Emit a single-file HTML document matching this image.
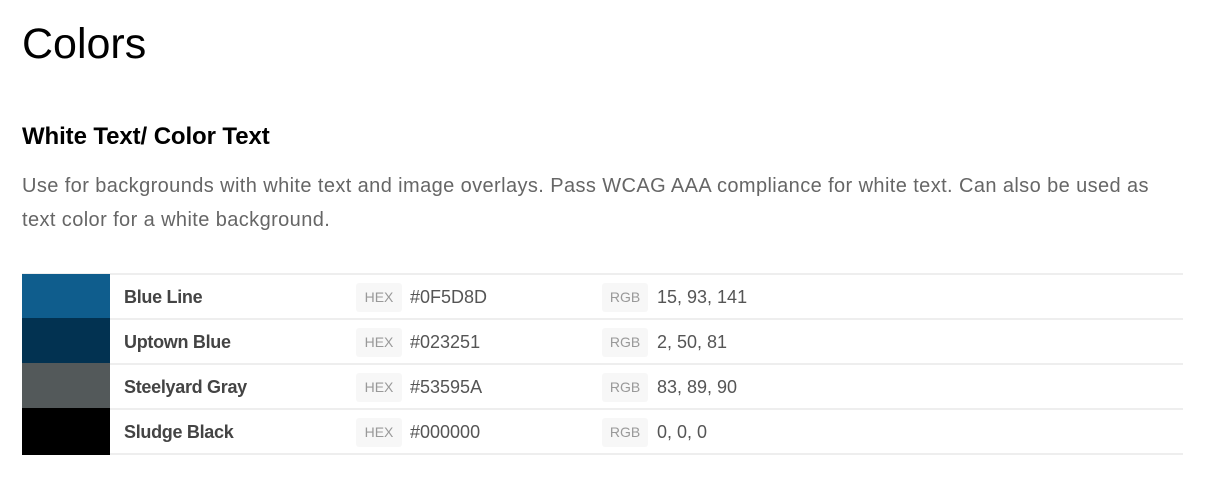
<!DOCTYPE html>
<html><head><style>
body{margin:0;background:#fff;font-family:"Liberation Sans",sans-serif;width:1216px;height:493px;overflow:hidden}
h1{position:absolute;left:22px;top:16px;margin:0;font-weight:normal;font-size:43px;color:#000;line-height:56px}
h2{position:absolute;left:22px;top:123px;margin:0;font-size:24px;color:#000;line-height:28px;letter-spacing:-0.1px}
p{position:absolute;left:22px;top:169px;margin:0;width:1190px;font-size:20px;line-height:34px;color:#666;letter-spacing:0.4px;white-space:nowrap}
.t{position:absolute;left:22px;top:273px;width:1161px;border-top:2px solid #eee}
.r{height:43px;border-bottom:2px solid #eee;position:relative;font-size:18px;color:#555}
.sw{position:absolute;left:0;top:-2px;width:88px;height:47px}
.r:first-child .sw{top:-1px;height:46px}
.n{position:absolute;left:102px;top:12px;font-weight:bold;font-size:18px;color:#444;letter-spacing:-0.3px}
.b{position:absolute;top:8px;width:46px;height:29px;background:#f7f7f7;border-radius:3px;color:#999;font-size:14px;text-align:center;line-height:29px}
.v{position:absolute;top:12px}
</style></head><body>
<h1>Colors</h1>
<h2>White Text/ Color Text</h2>
<p>Use for backgrounds with white text and image overlays. Pass WCAG AAA compliance for white text. Can also be used as<br>text color for a white background.</p>
<div class="t">
<div class="r"><div class="sw" style="background:#0F5D8D"></div><span class="n">Blue Line</span><span class="b" style="left:334px">HEX</span><span class="v" style="left:388px">#0F5D8D</span><span class="b" style="left:580px">RGB</span><span class="v" style="left:635px">15, 93, 141</span></div>
<div class="r"><div class="sw" style="background:#023251"></div><span class="n">Uptown Blue</span><span class="b" style="left:334px">HEX</span><span class="v" style="left:388px">#023251</span><span class="b" style="left:580px">RGB</span><span class="v" style="left:635px">2, 50, 81</span></div>
<div class="r"><div class="sw" style="background:#53595A"></div><span class="n">Steelyard Gray</span><span class="b" style="left:334px">HEX</span><span class="v" style="left:388px">#53595A</span><span class="b" style="left:580px">RGB</span><span class="v" style="left:635px">83, 89, 90</span></div>
<div class="r"><div class="sw" style="background:#000"></div><span class="n">Sludge Black</span><span class="b" style="left:334px">HEX</span><span class="v" style="left:388px">#000000</span><span class="b" style="left:580px">RGB</span><span class="v" style="left:635px">0, 0, 0</span></div>
</div>
</body></html>
